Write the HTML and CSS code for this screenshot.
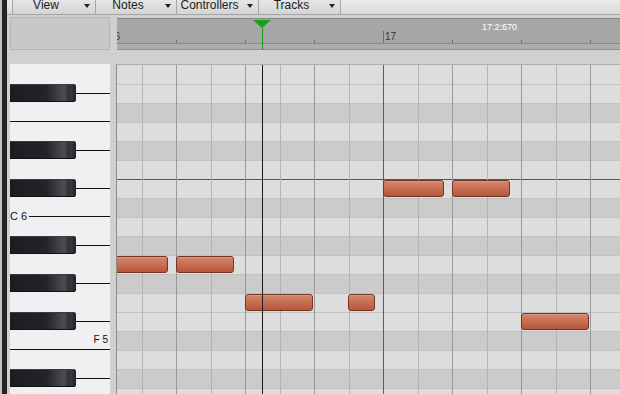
FILE: index.html
```html
<!DOCTYPE html>
<html lang="en">
<head>
<meta charset="UTF-8">
<meta name="viewport" content="width=device-width, initial-scale=1.0">
<title>Piano Roll</title>
<link rel="stylesheet" href="styles.css">
</head>
<body>

<div class="window">
  <div class="edge"></div>
  <div class="main">
    <div class="toolbar">
      <div class="menu-btn btn-view"><span class="menu-label">View</span><span class="menu-arrow"></span></div>
      <div class="menu-btn btn-notes"><span class="menu-label">Notes</span><span class="menu-arrow"></span></div>
      <div class="menu-btn btn-controllers"><span class="menu-label">Controllers</span><span class="menu-arrow"></span></div>
      <div class="menu-btn btn-tracks"><span class="menu-label">Tracks</span><span class="menu-arrow"></span></div>
    </div>

    <div class="header-row">
      <div class="corner"></div>
      <div class="ruler">
        <div class="ruler-ticks" id="rulerTicks"></div>
        <div class="ruler-foot"></div>
        <div class="ruler-time">17:2:670</div>
        <div class="playhead-marker">
          <div class="marker-head"></div>
          <div class="marker-line"></div>
        </div>
      </div>
    </div>

    <div class="roll">
      <div class="keyboard" id="keyboard"></div>
      <div class="grid">
        <div class="grid-rows" id="gridRows"></div>
        <div class="grid-cols" id="gridCols"></div>
        <div class="grid-notes" id="gridNotes"></div>
        <div class="grid-playhead"></div>
      </div>
    </div>
  </div>
</div>

<script>
  const ROWS = 18;
  const ROW_HEIGHT = 19;

  // Keyboard: black keys, white key edges and octave names
  const keyboard = document.getElementById("keyboard");
  const blackRows = [1, 4, 6, 9, 11, 13, 16];
  const edgeRows = [3, 15];

  for (let i = 0; i < ROWS; i++) {
    const row = document.createElement("div");
    row.className = "key-row";

    if (blackRows.includes(i)) {
      row.innerHTML = '<div class="black-key"></div><div class="key-stub"></div>';
    } else if (edgeRows.includes(i)) {
      row.classList.add("edge-line");
    } else if (i === 8) {
      row.classList.add("octave");
      row.innerHTML = '<span class="key-name">C 6</span><div class="key-edge"></div>';
    } else if (i === 14) {
      row.classList.add("named");
      row.innerHTML = '<span class="key-name small">F 5</span>';
    }
    keyboard.appendChild(row);
  }

  // Grid rows
  const gridRows = document.getElementById("gridRows");
  const darkRows = [2, 4, 7, 9, 11, 14, 16];

  for (let i = 0; i < ROWS; i++) {
    const row = document.createElement("div");
    row.className = "grid-row";
    if (darkRows.includes(i)) row.classList.add("dark");
    if (i === 6) row.classList.add("octave");
    gridRows.appendChild(row);
  }

  // Grid columns (half beats), starting from bar 16
  const gridCols = document.getElementById("gridCols");
  for (let i = 0; i < 16; i++) {
    const col = document.createElement("div");
    col.className = "grid-col";
    col.style.width = (i % 2 === 0 ? 35 : 34) + "px";
    if (i % 8 === 0) col.classList.add("bar");
    else if (i % 2 === 0) col.classList.add("beat");
    gridCols.appendChild(col);
  }

  // Ruler ticks, one per beat
  const rulerTicks = document.getElementById("rulerTicks");
  for (let i = 0; i < 9; i++) {
    const tick = document.createElement("div");
    tick.className = "tick";
    if (i % 4 === 0) {
      tick.classList.add("bar");
      tick.textContent = 16 + i / 4;
    }
    rulerTicks.appendChild(tick);
  }

  // Notes: row, x offset and length in pixels
  const notes = [
    { row: 6, x: 266, w: 61 },
    { row: 6, x: 335, w: 58 },
    { row: 10, x: -13, w: 64 },
    { row: 10, x: 59, w: 58 },
    { row: 12, x: 128, w: 68 },
    { row: 12, x: 231, w: 27 },
    { row: 13, x: 404, w: 68 }
  ];

  const gridNotes = document.getElementById("gridNotes");
  notes.forEach(n => {
    const note = document.createElement("div");
    note.className = "note";
    note.style.left = n.x + "px";
    note.style.top = (n.row * ROW_HEIGHT + 1) + "px";
    note.style.width = n.w + "px";
    gridNotes.appendChild(note);
  });
</script>

</body>
</html>
```

FILE: styles.css
```css
body {
  margin: 0;
  font-family: "Liberation Sans", Arial, sans-serif;
  background-color: #d0d0d0;
  overflow: hidden;
}
.window {
  display: flex;
  width: 620px;
  height: 394px;
  overflow: hidden;
}
.edge {
  width: 5px;
  flex: none;
  border-left: 2px solid #c2c2c2;
  background-color: #252525;
}
.main {
  flex: 1;
  min-width: 0;
  display: flex;
  flex-direction: column;
}

/* toolbar */
.toolbar {
  height: 14px;
  flex: none;
  display: flex;
  padding-left: 5px;
  background: linear-gradient(#ebebeb, #dadada);
  border-bottom: 1px solid #a4a4a4;
}
.menu-btn {
  display: flex;
  border-right: 1px solid #a6a6a6;
  background: linear-gradient(#e6e6e6, #d4d4d4);
}
.menu-btn:first-child {
  border-left: 1px solid #a6a6a6;
}
.btn-view { width: 82px; }
.btn-notes { width: 80px; }
.btn-controllers { width: 81px; }
.btn-tracks { width: 81px; }
.menu-label {
  flex: 1;
  text-align: center;
  font-size: 12px;
  line-height: 10px;
  color: #1c1c1c;
}
.menu-arrow {
  width: 16px;
  display: flex;
  justify-content: center;
  padding-top: 4px;
}
.menu-arrow::before {
  content: "";
  height: 0;
  border-left: 3px solid transparent;
  border-right: 3px solid transparent;
  border-top: 4px solid #222;
}

/* ruler row */
.header-row {
  display: flex;
  height: 33px;
  flex: none;
  margin-top: 2px;
  padding-left: 3px;
}
.corner {
  width: 98px;
  border: 1px solid #b6b6b6;
  background-color: #c8c8c8;
}
.ruler {
  flex: 1;
  box-sizing: border-box;
  height: 32px;
  margin: 1px 0 0 7px;
  border-top: 1px solid #868686;
  background-color: #a7a7a7;
  position: relative;
  overflow: hidden;
  display: flex;
  flex-direction: column;
}
.ruler-ticks {
  height: 24px;
  flex: none;
  display: flex;
  margin-left: -10px;
  border-bottom: 1px solid #8a8a8a;
}
.tick {
  width: 69px;
  flex: none;
  box-sizing: border-box;
  background: linear-gradient(#6c6c6c, #6c6c6c) no-repeat left bottom / 1px 3px;
}
.tick.bar {
  background-size: 1px 12px;
  padding: 13px 0 0 2px;
  font-size: 10px;
  line-height: 10px;
  color: #333;
}
.ruler-foot {
  flex: 1;
  background-color: #adadad;
  border-bottom: 1px solid #8f8f8f;
}
.ruler-time {
  position: absolute;
  left: 365px;
  top: 3px;
  font-size: 9px;
  line-height: 10px;
  color: #fff;
}
.playhead-marker {
  position: absolute;
  left: 136px;
  top: 1px;
  width: 18px;
  height: 31px;
  display: flex;
  flex-direction: column;
}
.marker-head {
  width: 0;
  height: 0;
  border-left: 9px solid transparent;
  border-right: 9px solid transparent;
  border-top: 8px solid #17a317;
}
.marker-line {
  flex: 1;
  width: 1px;
  margin-left: 9px;
  background-color: #1b9c1b;
}

/* piano roll */
.roll {
  flex: 1;
  min-height: 0;
  display: flex;
  margin-top: 14px;
  padding-left: 3px;
}
.keyboard {
  width: 100px;
  flex: none;
  background-color: #eff0f2;
  display: flex;
  flex-direction: column;
  overflow: hidden;
}
.key-row {
  height: 19px;
  flex: none;
  box-sizing: border-box;
  display: flex;
  align-items: flex-start;
}
.key-row.edge-line {
  border-top: 1px solid #111;
}
.key-row.named {
  justify-content: flex-end;
  align-items: flex-end;
  padding: 0 2px 4px 0;
}
.black-key {
  width: 66px;
  height: 18px;
  margin-top: 1px;
  border-radius: 0 3px 3px 0;
  background: linear-gradient(to right, #1c1d20 0%, #232428 55%, #4c4e53 82%, #2c2d31 90%, #3d3e42 91%, #1f2023 100%);
  box-shadow: inset 0 1px 0 #3b3c40, inset 0 -1px 0 #111;
}
.key-stub {
  flex: 1;
  height: 1px;
  margin-top: 10px;
  background-color: #111;
}
.key-name {
  font-size: 11px;
  line-height: 10px;
  color: #111;
  margin-top: -5px;
  padding-right: 2px;
}
.key-name.small {
  font-size: 10px;
  margin-top: 0;
  padding-right: 0;
}
.key-edge {
  flex: 1;
  border-top: 1px solid #111;
}

.grid {
  flex: 1;
  margin-left: 6px;
  position: relative;
  overflow: hidden;
  border-left: 1px solid #8e8e8e;
  border-top: 1px solid #adadad;
  background-color: #dcdcdc;
}
.grid-row {
  height: 19px;
  box-sizing: border-box;
  border-top: 1px solid #c1c1c1;
  background-color: #dddddd;
}
.grid-row:first-child {
  border-top-color: transparent;
}
.grid-row.dark {
  background-color: #cbcbcb;
}
.grid-row.octave {
  border-top-color: #555;
}
.grid-cols {
  position: absolute;
  top: 0;
  bottom: 0;
  left: -10px;
  display: flex;
}
.grid-col {
  flex: none;
  box-sizing: border-box;
  border-left: 1px solid #b4b4b4;
}
.grid-col.beat {
  border-left-color: #999;
}
.grid-col.bar {
  border-left-color: #5d5d5d;
}
.grid-notes {
  position: absolute;
  inset: 0;
}
.note {
  position: absolute;
  height: 17px;
  box-sizing: border-box;
  border: 1px solid #713526;
  border-radius: 3px;
  background: linear-gradient(#d7866c, #b5573c);
  box-shadow: inset 0 1px 0 rgba(255, 255, 255, 0.15);
}
.grid-playhead {
  position: absolute;
  left: 145px;
  top: 0;
  bottom: 0;
  width: 1px;
  background-color: #1b1b1b;
}
```
